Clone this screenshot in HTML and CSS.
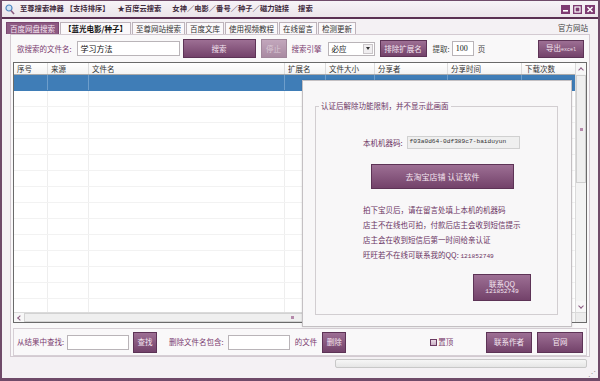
FILE: index.html
```html
<!DOCTYPE html>
<html lang="zh-CN">
  <head>
    <meta charset="UTF-8" />
    <title>至尊搜索神器</title>
    <link rel="stylesheet" href="styles.css">
  </head>
  <body>
    <div class="window">
      <div class="titlebar">
        <svg class="app-icon" width="10" height="11" viewBox="0 0 10 11">
          <circle cx="4" cy="4" r="3" fill="#cfe3f5" stroke="#4f86c0" stroke-width="1.2" />
          <line x1="6" y1="6.5" x2="9" y2="10" stroke="#8a5a80" stroke-width="1.6" />
        </svg>
        <span class="title-item t1">至尊搜索神器</span>
        <span class="title-item t2">【支持排序】</span>
        <span class="title-item t3">★百度云搜索</span>
        <span class="title-item t4">女神／电影／番号／种子／磁力链接</span>
        <span class="title-item t5">搜索</span>
        <div class="win-ctrls">
          <span class="ctrl"><svg width="9" height="9" viewBox="0 0 9 9"><rect x="2" y="5" width="5" height="1.6" fill="#fff" /></svg></span>
          <span class="ctrl"><svg width="9" height="9" viewBox="0 0 9 9"><rect x="2" y="2" width="5" height="5" fill="none" stroke="#fff" stroke-width="1.2" /></svg></span>
          <span class="ctrl close"><svg width="10" height="9" viewBox="0 0 10 9"><path d="M2.5 2 L7.5 7 M7.5 2 L2.5 7" stroke="#fff" stroke-width="1.5" /></svg></span>
        </div>
      </div>

      <div class="tabs-row">
        <span class="tab active">百度网盘搜索</span>
        <span class="tab strong">【蓝光电影/种子】</span>
        <span class="tab">至尊网站搜索</span>
        <span class="tab">百度文库</span>
        <span class="tab">使用视频教程</span>
        <span class="tab">在线留言</span>
        <span class="tab">检测更新</span>
        <span class="site-link">官方网站</span>
      </div>

      <div class="panel">
        <div class="search-row">
          <span class="label">欲搜索的文件名:</span>
          <span class="input keyword">学习方法</span>
          <span class="btn btn-search">搜索</span>
          <span class="btn btn-stop">停止</span>
          <span class="label engine-label">搜索引擎</span>
          <span class="select">必应<span class="select-arrow"></span></span>
          <span class="btn btn-ext">排除扩展名</span>
          <span class="label fetch-label">提取:</span>
          <span class="input pages">100</span>
          <span class="label page-unit">页</span>
          <span class="btn btn-export"><span>导出<small>excel</small></span></span>
        </div>

        <div class="grid">
          <div class="grid-main">
            <div class="table-area">
              <div class="grid-head">
                <span class="cell c1">序号</span>
                <span class="cell c2">来源</span>
                <span class="cell c3">文件名</span>
                <span class="cell c4">扩展名</span>
                <span class="cell c5">文件大小</span>
                <span class="cell c6">分享者</span>
                <span class="cell c7">分享时间</span>
                <span class="cell c8">下载次数</span>
              </div>
              <div class="grid-body" id="gridBody"></div>
            </div>
            <div class="vscroll">
              <span class="arrow up"></span>
              <span class="thumb"><i></i></span>
              <span class="arrow down"></span>
            </div>
          </div>
          <div class="hscroll">
            <span class="arrow left"></span>
            <span class="hthumb"><i></i></span>
            <span class="arrow right"></span>
            <span class="corner"></span>
          </div>
        </div>

        <div class="bottom-box">
          <span class="label">从结果中查找:</span>
          <span class="input find-input"></span>
          <span class="btn btn-small find-btn">查找</span>
          <span class="label del-label">删除文件名包含:</span>
          <span class="input del-input"></span>
          <span class="label del-suffix">的文件</span>
          <span class="btn btn-small del-btn">删除</span>
          <span class="checkbox"></span>
          <span class="label top-label">置顶</span>
          <div class="right-btns">
            <span class="btn btn-author">联系作者</span>
            <span class="btn btn-site">官网</span>
          </div>
        </div>
      </div>

      <div class="status">
        <div class="progress"></div>
        <span class="grip">⋰</span>
      </div>

      <div class="auth-dialog">
        <div class="groupbox">
          <span class="legend">认证后解除功能限制，并不显示此画面</span>
          <div class="machine-row">
            <span>本机机器码:</span>
            <span class="machine-code">f03a0d64-0df389c7-baiduyun</span>
          </div>
          <span class="btn btn-taobao">去淘宝店铺 认证软件</span>
          <div class="notes">
            <p>拍下宝贝后，请在留言处填上本机的机器码</p>
            <p>店主不在线也可拍，付款后店主会收到短信提示</p>
            <p>店主会在收到短信后第一时间给亲认证</p>
            <p>旺旺若不在线可联系我的QQ: <span class="num">121852749</span></p>
          </div>
          <span class="btn btn-qq"><span>联系QQ</span><span class="num">121852749</span></span>
        </div>
      </div>
    </div>

    <script>
      // 表格空行
      const gridBody = document.getElementById("gridBody");
      for (let i = 0; i < 15; i++) {
        const row = document.createElement("div");
        row.className = i === 0 ? "row selected" : "row";
        for (let c = 1; c <= 8; c++) {
          const cell = document.createElement("span");
          cell.className = "cell c" + c;
          row.appendChild(cell);
        }
        gridBody.appendChild(row);
      }
    </script>
  </body>
</html>
```

FILE: styles.css
```css
* {
  box-sizing: border-box;
  margin: 0;
  padding: 0;
}

body {
  font-family: "Noto Sans CJK SC", "Liberation Sans", sans-serif;
  font-size: 7.5px;
  line-height: 1;
  color: #333;
  background: #fff;
}

.window {
  position: relative;
  width: 600px;
  height: 381px;
  border: 2px solid #6f4a69;
  border-top-width: 1px;
  border-bottom-width: 3px;
  background: #f4f1f4;
  display: flex;
  flex-direction: column;
  overflow: hidden;
}

/* 标题栏 */
.titlebar {
  height: 18px;
  flex: none;
  display: flex;
  align-items: center;
  padding-left: 3px;
  background: linear-gradient(#f7f3f7, #ebe4ea);
  border-bottom: 2px solid #5a2f52;
}

.app-icon {
  flex: none;
}

.title-item {
  font-size: 7.3px;
  font-weight: bold;
  color: #3f2a3c;
  white-space: nowrap;
}

.t1 { margin-left: 5px; }
.t2 { margin-left: 2px; }
.t3 { margin-left: 8px; }
.t4 { margin-left: 11px; }
.t5 { margin-left: 9px; }

.win-ctrls {
  margin-left: auto;
  margin-right: 3px;
  display: flex;
  gap: 3px;
}

.ctrl {
  width: 9px;
  height: 9px;
  background: #7e3b72;
  display: flex;
}

.ctrl.close {
  width: 10px;
}

/* 选项卡 */
.tabs-row {
  height: 15px;
  flex: none;
  display: flex;
  align-items: flex-end;
  padding-left: 4px;
  gap: 1px;
}

.tab {
  height: 12px;
  padding: 0 3px;
  display: flex;
  align-items: center;
  background: #faf8fa;
  border: 1px solid #bdb3bb;
  border-bottom: none;
  color: #333;
  white-space: nowrap;
}

.tab.active {
  background: #8d5a83;
  border-color: #7a4570;
  color: #f6e6f2;
}

.tab.strong {
  color: #111;
  font-weight: bold;
}

.site-link {
  margin-left: auto;
  margin-right: 10px;
  align-self: center;
  margin-top: 3px;
  color: #444;
}

/* 主面板 */
.panel {
  flex: none;
  height: 323px;
  margin: 0 8px;
  border: 1px solid #d3cad1;
  padding: 0 2px;
  background: #f9f8f9;
  display: flex;
  flex-direction: column;
}

.label {
  color: #7a3b6f;
  white-space: nowrap;
}

.input {
  height: 15px;
  background: #fff;
  border: 1px solid #b9b4b8;
  display: flex;
  align-items: center;
  padding-left: 3px;
  color: #111;
}

.btn {
  display: flex;
  align-items: center;
  justify-content: center;
  text-align: center;
  background: linear-gradient(#9d6f94, #73426a);
  border: 1px solid #5d3356;
  color: #f4e5f0;
  white-space: nowrap;
}

.search-row {
  height: 27px;
  flex: none;
  display: flex;
  align-items: center;
  padding-left: 4px;
  padding-right: 3px;
}

.keyword {
  margin-left: 5px;
  width: 103px;
  font-size: 8px;
}

.btn-search {
  margin-left: 3px;
  width: 73px;
  height: 19px;
}

.btn-stop {
  margin-left: 5px;
  width: 26px;
  height: 19px;
  background: linear-gradient(#c2a7bc, #a98aa2);
  border-color: #a0869a;
  color: #d9c9d5;
}

.engine-label {
  margin-left: 5px;
}

.select {
  margin-left: 6px;
  width: 47px;
  height: 14px;
  background: #fff;
  border: 1px solid #b9b4b8;
  display: flex;
  align-items: center;
  padding-left: 3px;
  color: #111;
}

.select-arrow {
  margin-left: auto;
  margin-right: 1px;
  width: 10px;
  height: 10px;
  background: #f0eef0;
  border: 1px solid #c9c5c8;
  display: flex;
  align-items: center;
  justify-content: center;
}

.select-arrow::after {
  content: "";
  border-left: 2.5px solid transparent;
  border-right: 2.5px solid transparent;
  border-top: 3px solid #333;
}

.btn-ext {
  margin-left: 5px;
  width: 47px;
  height: 17px;
}

.fetch-label {
  margin-left: 6px;
  color: #444;
}

.pages {
  margin-left: 2px;
  width: 22px;
  font-family: "Liberation Serif", serif;
  font-size: 8px;
}

.page-unit {
  margin-left: 4px;
  color: #444;
}

.btn-export {
  margin-left: auto;
  width: 46px;
  height: 18px;
}

.btn-export small {
  font-family: "Liberation Mono", monospace;
  font-size: 5px;
  vertical-align: baseline;
}

/* 结果表格 */
.grid {
  height: 261px;
  flex: none;
  border: 1px solid #6a6a6a;
  background: #fff;
  display: flex;
  flex-direction: column;
}

.grid-main {
  flex: 1;
  display: flex;
  min-height: 0;
}

.table-area {
  flex: 1;
  overflow: hidden;
}

.grid-head,
.row {
  display: flex;
}

.grid-head {
  height: 12px;
  background: linear-gradient(#ffffff, #f3f3f3);
  border-bottom: 1px solid #a9a9a9;
}

.grid-head .cell {
  border-right: 1px solid #dcdcdc;
  padding-left: 3px;
  display: flex;
  align-items: center;
  color: #333;
  white-space: nowrap;
}

.cell {
  flex: none;
}

.c1 { width: 34px; }
.c2 { width: 41px; }
.c3 { width: 196px; }
.c4 { width: 41px; }
.c5 { width: 49px; }
.c6 { width: 73px; }
.c7 { width: 74px; }
.c8 { width: 55px; }

.row {
  height: 16px;
  border-bottom: 1px solid #f2f2f2;
}

.row .cell {
  border-right: 1px solid #eeeeee;
}

.row.selected {
  background: #3f7db7;
  border-bottom-color: #3f7db7;
}

.row.selected .cell {
  border-right-color: #6e9ecb;
}

.vscroll {
  width: 11px;
  flex: none;
  background: #f3f3f3;
  border-left: 1px solid #dadada;
  display: flex;
  flex-direction: column;
}

.arrow {
  flex: none;
  width: 10px;
  height: 11px;
  background: #f7f7f7;
  display: flex;
  align-items: center;
  justify-content: center;
}

.arrow::after {
  content: "";
  width: 3px;
  height: 3px;
  border-left: 1px solid #8a5a80;
  border-top: 1px solid #8a5a80;
}

.arrow.up::after { transform: translateY(1px) rotate(45deg); }
.arrow.down::after { transform: translateY(-1px) rotate(225deg); }
.arrow.left::after { transform: translateX(1px) rotate(-45deg); }
.arrow.right::after { transform: translateX(-1px) rotate(135deg); }

.vscroll .thumb {
  margin: 1px 0 0 0;
  height: 108px;
  background: #efefef;
  border: 1px solid #cfcfcf;
  display: flex;
  align-items: center;
  justify-content: center;
}

.thumb i,
.hthumb i {
  width: 3px;
  height: 3px;
  background: #b58aab;
}

.vscroll .down {
  margin-top: auto;
}

.hscroll {
  height: 10px;
  flex: none;
  background: #f3f3f3;
  border-top: 1px solid #dadada;
  display: flex;
}

.hscroll .arrow {
  height: 9px;
}

.hthumb {
  flex: 1;
  background: #efefef;
  border: 1px solid #d2d2d2;
  margin-right: 4px;
  display: flex;
  align-items: center;
  justify-content: center;
}

.corner {
  width: 11px;
  background: #ececec;
  border-left: 1px solid #dadada;
}

/* 底部操作 */
.bottom-box {
  margin-top: 5px;
  height: 28px;
  flex: none;
  border: 1px solid #d6cfd5;
  display: flex;
  align-items: center;
  padding-left: 3px;
  padding-right: 3px;
}

.find-input {
  margin-left: 3px;
  width: 62px;
}

.btn-small {
  width: 24px;
  height: 21px;
}

.find-btn {
  margin-left: 4px;
}

.del-label {
  margin-left: 12px;
}

.del-input {
  margin-left: 4px;
  width: 62px;
}

.del-suffix {
  margin-left: 5px;
}

.del-btn {
  margin-left: 5px;
}

.checkbox {
  margin-left: 84px;
  width: 7px;
  height: 7px;
  border: 1px solid #6b3a62;
  background: linear-gradient(#e9dbe6, #c9b0c3);
}

.top-label {
  margin-left: 1px;
}

.right-btns {
  margin-left: auto;
  display: flex;
  gap: 5px;
}

.btn-author,
.btn-site {
  width: 46px;
  height: 21px;
}

/* 状态栏 */
.status {
  height: 21px;
  flex: none;
  display: flex;
  align-items: flex-start;
  justify-content: flex-end;
  position: relative;
}

.progress {
  margin-top: 2px;
  margin-right: 11px;
  width: 252px;
  height: 9px;
  background: linear-gradient(#f6f6f6, #e6e6e6);
  border: 1px solid #c8c8c8;
  border-radius: 2px;
}

.grip {
  position: absolute;
  right: 2px;
  bottom: 1px;
  font-size: 8px;
  color: #999;
}

/* 认证提示框 */
.auth-dialog {
  position: absolute;
  left: 300px;
  top: 79px;
  width: 270px;
  height: 247px;
  background: #f8f7f8;
  border: 1px solid #c4c0c3;
  box-shadow: 0 0 2px rgba(0, 0, 0, 0.15);
  padding: 25px 0 0 12px;
  color: #6b3463;
}

.groupbox {
  position: relative;
  width: 243px;
  height: 209px;
  border: 1px solid #d2ced1;
  padding: 29px 0 0 47px;
  display: flex;
  flex-direction: column;
  align-items: flex-start;
}

.legend {
  position: absolute;
  left: 3px;
  top: -5px;
  padding: 0 2px;
  background: #f8f7f8;
  white-space: nowrap;
}

.machine-row {
  height: 13px;
  display: flex;
  align-items: center;
}

.machine-code {
  margin-left: 4px;
  width: 113px;
  height: 13px;
  background: #efefef;
  border: 1px solid #d0d0d0;
  display: flex;
  align-items: center;
  padding-left: 2px;
  font-family: "Liberation Mono", monospace;
  font-size: 6.2px;
  color: #333;
}

.btn-taobao {
  margin-top: 15px;
  margin-left: 8px;
  width: 143px;
  height: 25px;
  font-size: 8px;
}

.notes {
  margin-top: 13px;
}

.notes p {
  height: 15px;
  line-height: 15px;
  white-space: nowrap;
}

.num {
  font-family: "Liberation Mono", monospace;
  font-size: 6.2px;
}

.btn-qq {
  margin-top: 12px;
  margin-left: 110px;
  width: 58px;
  height: 27px;
  flex-direction: column;
  gap: 2px;
}
```
